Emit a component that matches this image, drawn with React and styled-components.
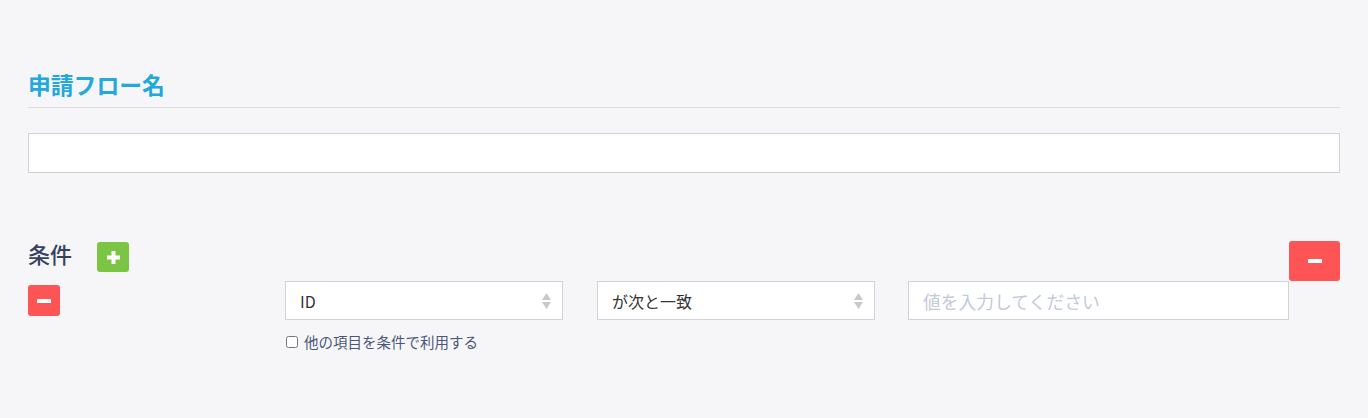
import React from "react";
import styled, { createGlobalStyle } from "styled-components";

const Global = createGlobalStyle`
  html, body { margin: 0; padding: 0; background: #f6f6f8; }
  body {
    font-family: "Noto Sans CJK JP", "Noto Sans", "Liberation Sans", sans-serif;
    color: #333;
  }
  * { box-sizing: border-box; }
`;

const Page = styled.div`
  min-height: 418px;
  padding: 69px 28px 0 28px;
  background: #f6f6f8;
`;

const SectionTitle = styled.h2`
  margin: 0;
  font-size: 22.8px;
  line-height: 32px;
  font-weight: 700;
  color: #22a8da;
  padding-bottom: 6px;
  border-bottom: 1px solid #dcdce0;
`;

const NameInput = styled.input`
  display: block;
  width: 100%;
  height: 40px;
  margin-top: 25px;
  border: 1px solid #d2d2d6;
  background: #fff;
  padding: 0 14px;
  font: inherit;
  font-size: 16px;
  outline: none;
`;

const ConditionBlock = styled.div`
  display: flex;
  align-items: flex-start;
  margin-top: 68px;
`;

const ConditionMain = styled.div`
  flex: 1;
`;

const ConditionHeader = styled.div`
  display: flex;
  align-items: flex-start;
  height: 40px;
  gap: 25px;
`;

const Label = styled.span`
  font-size: 22px;
  line-height: 30px;
  font-weight: 500;
  color: #36425f;
  margin-top: -3px;
`;

const IconButton = styled.button`
  display: inline-flex;
  align-items: center;
  justify-content: center;
  flex: none;
  width: ${(p) => p.$w || 32}px;
  height: ${(p) => p.$h || 31}px;
  margin-top: ${(p) => p.$top || 0}px;
  padding: 0;
  border: none;
  border-radius: 3px;
  background: ${(p) => (p.$variant === "add" ? "#7cc443" : "#ff5455")};
  cursor: pointer;
`;

const Row = styled.div`
  display: grid;
  grid-template-columns: 223px 278px 278px 1fr;
  column-gap: 34px;
  align-items: start;
`;

const RowRemove = styled.div`
  padding-top: 4px;
  line-height: 0;
`;

const Field = styled.div`
  display: flex;
  flex-direction: column;
  margin-left: ${(p) => p.$shift || 0}px;
`;

const SelectWrap = styled.div`
  position: relative;
  height: 39px;
`;

const Select = styled.select`
  appearance: none;
  -webkit-appearance: none;
  width: 100%;
  height: 39px;
  border: 1px solid #d2d2d6;
  border-radius: 0;
  background: #fff;
  padding: 0 30px 0 14px;
  font-family: "Noto Sans CJK JP", "Noto Sans", sans-serif;
  font-size: 16px;
  color: #333;
  outline: none;
`;

const Arrows = styled.svg`
  position: absolute;
  right: 12px;
  top: 50%;
  transform: translateY(-50%);
  pointer-events: none;
`;

const ValueInput = styled.input`
  width: 100%;
  height: 39px;
  border: 1px solid #d2d2d6;
  background: #fff;
  padding: 0 14px;
  font-family: "Noto Sans CJK JP", "Noto Sans", sans-serif;
  font-size: 17.8px;
  outline: none;
  &::placeholder { color: #c3cad9; }
`;

const CheckLabel = styled.label`
  display: flex;
  align-items: center;
  gap: 6px;
  margin-top: 12px;
  font-size: 14.5px;
  line-height: 20px;
  color: #4b5678;
  input {
    margin: 0 0 0 1px;
    width: 12px;
    height: 12px;
  }
`;

const Plus = () => (
  <svg width="13" height="13" viewBox="0 0 13 13">
    <rect x="4.5" y="0" width="4" height="13" fill="#fff" />
    <rect x="0" y="4.5" width="13" height="4" fill="#fff" />
  </svg>
);

const Minus = () => (
  <svg width="14" height="4" viewBox="0 0 14 4">
    <rect x="0" y="0" width="14" height="4" rx="0.5" fill="#fff" />
  </svg>
);

const UpDown = () => (
  <Arrows width="9" height="16" viewBox="0 0 9 16">
    <path d="M4.5 0 L9 7 L0 7 Z" fill="#c9c9cc" />
    <path d="M0 9 L9 9 L4.5 16 Z" fill="#c9c9cc" />
  </Arrows>
);

const SelectBox = ({ value, options }) => (
  <SelectWrap>
    <Select defaultValue={value}>
      {options.map((o) => (
        <option key={o}>{o}</option>
      ))}
    </Select>
    <UpDown />
  </SelectWrap>
);

export default function App() {
  return (
    <>
      <Global />
      <Page>
        <SectionTitle>申請フロー名</SectionTitle>
        <NameInput type="text" />

        <ConditionBlock>
          <ConditionMain>
            <ConditionHeader>
              <Label>条件</Label>
              <IconButton $variant="add" $h={30} $top={1} aria-label="add">
                <Plus />
              </IconButton>
            </ConditionHeader>
            <Row>
              <RowRemove>
                <IconButton aria-label="remove">
                  <Minus />
                </IconButton>
              </RowRemove>
              <Field>
                <SelectBox value="ID" options={["ID", "申請者", "部署"]} />
                <CheckLabel>
                  <input type="checkbox" />
                  他の項目を条件で利用する
                </CheckLabel>
              </Field>
              <Field>
                <SelectBox value="が次と一致" options={["が次と一致", "が次を含む"]} />
              </Field>
              <Field $shift={-1}>
                <ValueInput placeholder="値を入力してください" />
              </Field>
            </Row>
          </ConditionMain>
          <IconButton $w={51} $h={40} aria-label="remove condition">
            <Minus />
          </IconButton>
        </ConditionBlock>
      </Page>
    </>
  );
}
